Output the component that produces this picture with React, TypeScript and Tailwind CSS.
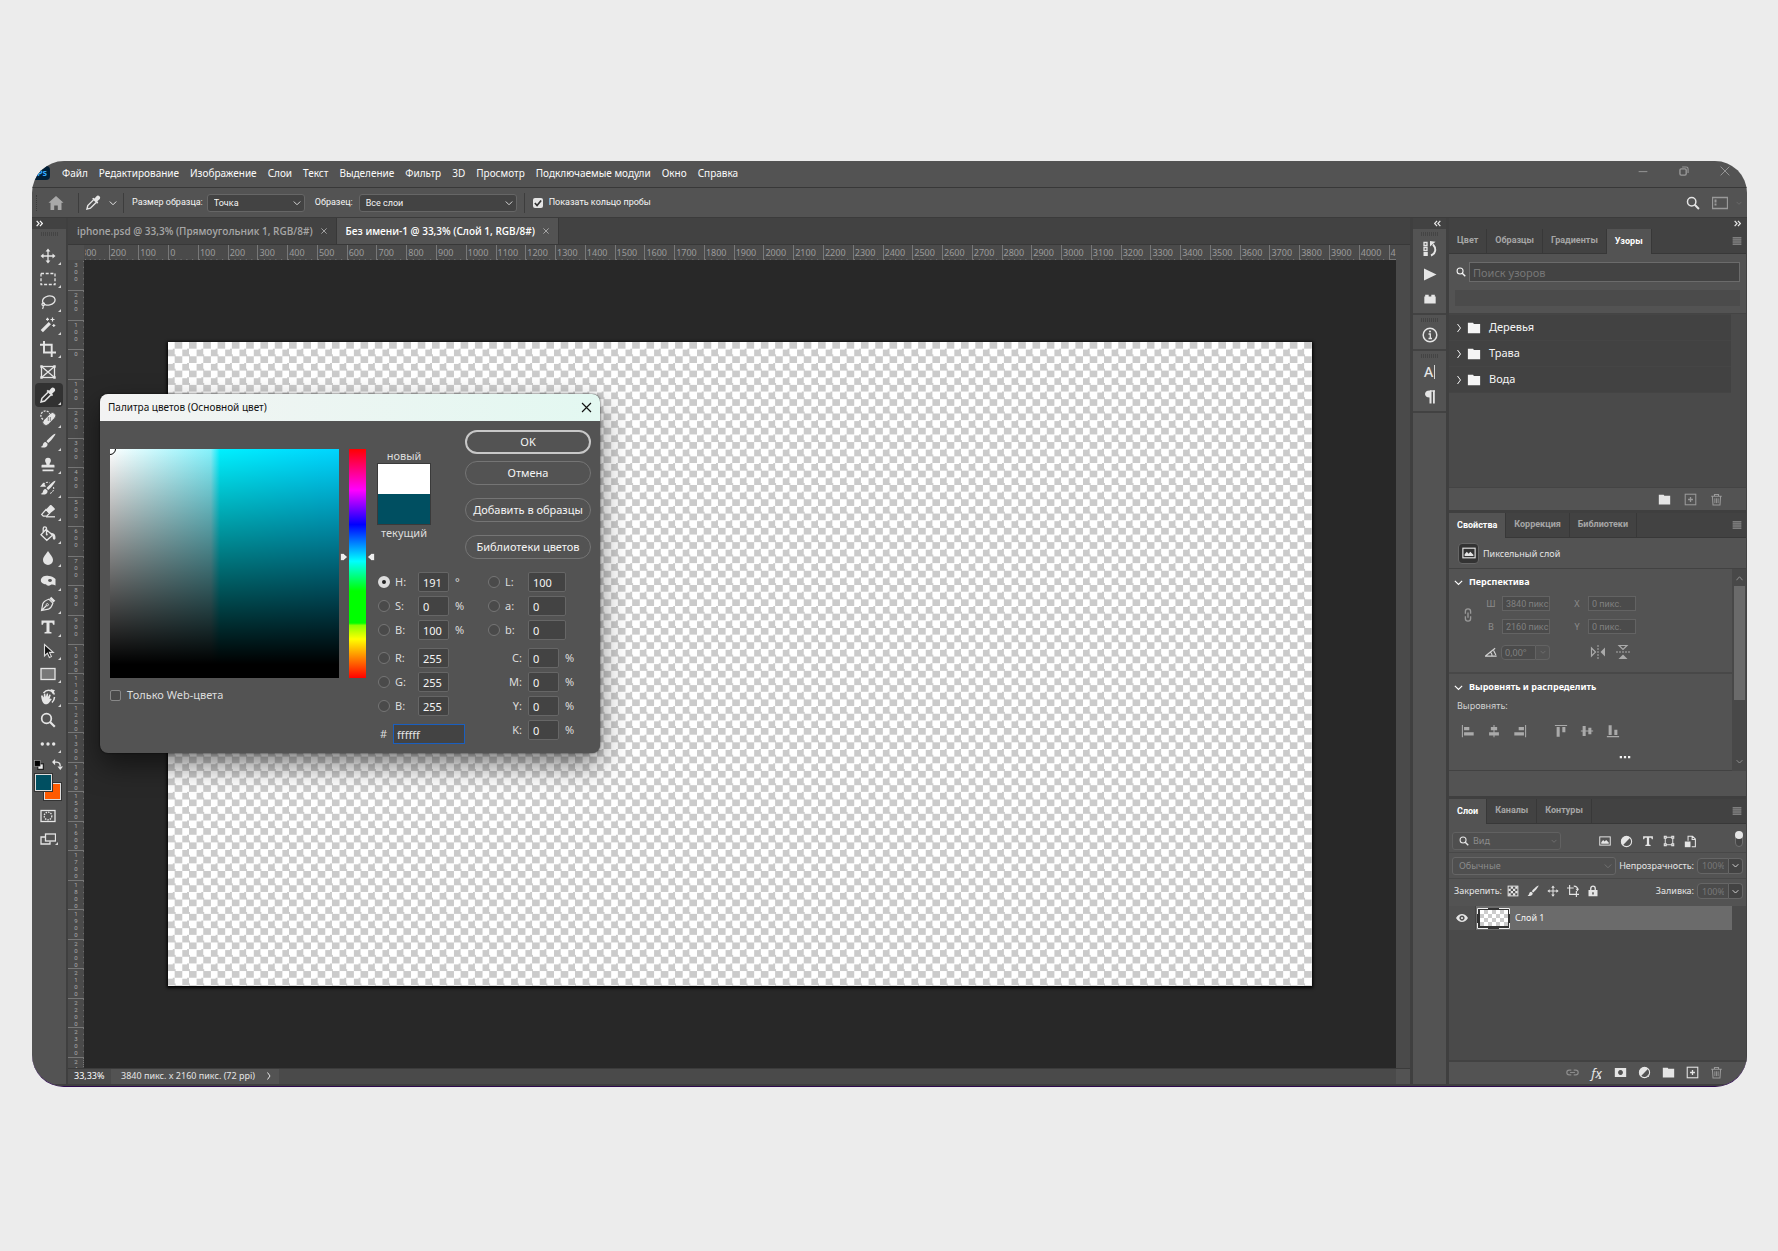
import React, { useState } from "react";

type IconProps = { className?: string; children: React.ReactNode };

function Icon({ className = "size-4", children }: IconProps) {
  return (
    <svg
      viewBox="0 0 16 16"
      className={className + " shrink-0"}
      fill="none"
      stroke="currentColor"
      strokeWidth="1.3"
      aria-hidden="true"
    >
      {children}
    </svg>
  );
}

const solid = { fill: "currentColor", stroke: "none" };

/* ---------- icon shapes ---------- */

const movePath = (
  <>
    <path d="M8 2.5v11M2.5 8h11" />
    <path {...solid} d="M8 .5l2.4 3H5.600zM8 15.500l2.400-3H5.600zM.5 8l3-2.400v4.800zM15.500 8l-3-2.400v4.800z" />
  </>
);
const folderPath = <path {...solid} d="M1 2h6l.8 1.500H15V14H1z" />;
const searchPath = (
  <>
    <circle cx="6.500" cy="6.500" r="4.800" strokeWidth="1.700" />
    <path d="M10 10l4.800 4.800" strokeWidth="2.200" />
  </>
);
const plusBoxPath = (
  <>
    <rect x="1.500" y="1.500" width="13" height="13" />
    <path d="M8 5v6M5 8h6" strokeWidth="1.600" />
  </>
);
const trashPath = (
  <>
    <path d="M1.500 4h13M5.500 4V1.800h5V4M3 4.500l.7 10.300h8.600L13 4.500" />
    <path d="M6 6.500v6M8 6.500v6M10 6.500v6" strokeWidth="1.100" />
  </>
);
const brushPath = (
  <path {...solid} d="M15.300.7c-.9-.5-7.300 5.200-8.800 7.500l1.700 1.700C10.500 8.400 16.200 1.500 15.300.7zM5.700 9c-2.100 0-2.500 1.600-2.900 3-.3 1-1.200 1.600-2.100 1.900 2.600 1.400 7.100.8 6.900-3.200z" />
);
const imagePath = (
  <>
    <rect x="1" y="2.500" width="14" height="11" />
    <path {...solid} d="M3 11.500V9.500l2.500-3 2 2.300L9.500 6.500l3.500 3.500v1.500z" />
  </>
);
const halfCirclePath = (
  <>
    <circle cx="8" cy="8" r="6.300" />
    <path {...solid} d="M3.500 12.500A6.300 6.300 0 0 1 12.500 3.500z" />
  </>
);
const textPath = (
  <path {...solid} d="M1.500 1.500h13v4.300h-1.400l-.8-2H9.500v8.900l2 .5v1.300h-7v-1.300l2-.5V3.800H3.700l-.8 2H1.500z" />
);
const eyedropperPath = (
  <>
    <path d="M8 5.200L1.900 11.300l-.9 3.700 3.700-.9L10.800 8" strokeWidth="1.500" />
    <path {...solid} d="M6.500 4l1.400-1.200 1.200.9 2.100-2.500c1.900-1.900 5.100.8 3.500 3.100l-2.600 2.400 1 1.200-1.200 1.400z" />
  </>
);

type Tool = { name: string; shape: React.ReactNode; active?: boolean; noCorner?: boolean };

const tools: Tool[] = [
  { name: "Перемещение", shape: movePath },
  { name: "Прямоугольная область", shape: <rect x="1" y="2.500" width="14" height="11" strokeDasharray="3 1.700" /> },
  {
    name: "Лассо",
    shape: (
      <>
        <ellipse cx="8.800" cy="6.500" rx="6.300" ry="4.500" transform="rotate(-12 8.800 6.500)" />
        <path d="M3.500 9c-2 .2-2 2.500-.2 2.500s1.400-2.400.2-2.500M3.200 11.500c.3 1.500 0 2.300-.7 3.300" />
      </>
    ),
  },
  {
    name: "Волшебная палочка",
    shape: (
      <>
        <path d="M1.800 14.200l8-8" strokeWidth="3.200" />
        <path d="M7.500.8v3M6 2.300h3M12.500.5v4M10.500 2.500h4M13.800 7v3M12.300 8.500h3" strokeWidth="1.200" />
      </>
    ),
  },
  { name: "Рамка", shape: <path d="M4 0v11.500h12M0 3.800h11.700V16" strokeWidth="1.900" /> },
  {
    name: "Кадр",
    noCorner: true,
    shape: (
      <>
        <rect x="1.500" y="2.500" width="13" height="11" />
        <path d="M1.500 2.500l13 11M14.500 2.500l-13 11" />
        <path {...solid} d="M.3 1.300h2.400v2.400H.3zM13.300 1.300h2.400v2.400h-2.400zM.3 12.300h2.400v2.400H.3zM13.300 12.300h2.400v2.400h-2.400z" />
      </>
    ),
  },
  { name: "Пипетка", active: true, shape: eyedropperPath },
  {
    name: "Восстанавливающая кисть",
    shape: (
      <>
        <circle cx="5.500" cy="5.500" r="4.600" strokeDasharray="2 1.200" strokeWidth="1.300" />
        <rect
          x="1.500"
          y="5.800"
          width="15.500"
          height="6.400"
          rx="3.200"
          transform="rotate(-45 9.300 9)"
          fill="currentColor"
          stroke="#535353"
          strokeWidth=".8"
        />
        <path d="M8.300 10l.01 0M10.300 8l.01 0M8.300 8l.01 0M10.300 10l.01 0" stroke="#535353" strokeLinecap="round" />
      </>
    ),
  },
  { name: "Кисть", shape: brushPath },
  {
    name: "Штамп",
    shape: (
      <path {...solid} d="M8 .8a2.900 2.900 0 0 1 2.900 2.900c0 1.600-1.400 2.200-1.400 4h4c.8 0 1 .6 1 1.200v1.600h-13V8.900c0-.6.2-1.200 1-1.200h4c0-1.800-1.400-2.400-1.400-4A2.900 2.900 0 0 1 8 .8zM2.500 12.500h11v1.700h-11z" />
    ),
  },
  {
    name: "Архивная кисть",
    shape: (
      <>
        {brushPath}
        <path {...solid} d="M0 6.800L3.500 2.500 6 6.800z" />
        <path d="M3.500 4.500C5 2.200 8 1.800 9.500 2.800M13.500 7c.8 2.500-.5 5.500-3.500 6.500" strokeDasharray="2 1" strokeWidth="1" />
      </>
    ),
  },
  {
    name: "Ластик",
    shape: (
      <>
        <path d="M6 6.500l3.500 3.800-2.700 2.900H3.300L1.700 11.400z" />
        <path {...solid} d="M6 6.500L10 2.300c.5-.5 1-.5 1.500 0l3 3c.5.5.5 1 0 1.500L9.500 10.800z" />
        <path d="M6 13.800h9" />
      </>
    ),
  },
  {
    name: "Заливка",
    shape: (
      <>
        <path d="M6 3.300l6.500 6-5.700 5L1 8.800zM6.500 8V2.500c0-2.300-3.300-2.300-3.300 0v3.800" />
        <circle cx="6.800" cy="8.500" r="1" {...solid} />
        <path {...solid} d="M10 6.500l3 .8c2 .7 2.500 2.500 2.500 4.800 0 2.300-2.700 2.300-2.700 0 0-1.200-.3-1.600-.3-2.800z" />
      </>
    ),
  },
  { name: "Размытие", shape: <path {...solid} d="M8 1c1.500 2.700 5 5.700 5 9a5 5 0 0 1-10 0C3 6.700 6.500 3.700 8 1z" /> },
  {
    name: "Губка",
    shape: (
      <>
        <path {...solid} d="M1 6C2 3 6 2 9 3c2 0 4.500 1.300 6.500 3v6.500c-1.500-.6-3.500-1.200-4.500-.7-2.500 1.700-4.500.7-5-.5C3.500 11.300 0 9.800 1 6z" />
        <ellipse cx="10" cy="7.500" rx="1.900" ry="1.400" fill="#535353" stroke="none" />
      </>
    ),
  },
  {
    name: "Перо",
    shape: (
      <>
        <path d="M1.500 14.500l1.300-6.800c.8-2 3.500-3.700 6-4.500l4 4c-.8 2.500-2.500 5.200-4.500 6zM1.500 14.500l5-5" strokeWidth="1.200" />
        <circle cx="7.300" cy="8.700" r="1.100" strokeWidth="1" />
        <path {...solid} d="M9.500 2.700l1.700-2 4.100 4.100-2 1.700z" />
      </>
    ),
  },
  { name: "Текст", shape: textPath },
  {
    name: "Выделение контура",
    shape: <path d="M4.500 1.500v11.500l2.900-2.800 2 4.300 2-.9-2-4.200h3.900z" fill="#111" stroke="#ddd" strokeWidth="1.100" />,
  },
  { name: "Прямоугольник", shape: <rect x="1" y="2.500" width="14" height="11" fill="#777" /> },
  {
    name: "Поворот вида",
    shape: (
      <>
        <path {...solid} d="M1.500 9.500L1 6.800l1.300-.5 1.400 2.200.2-3.700 1.300-.2.6 3.100 1-3.300 1.300.2-.2 3.400L9.600 5.300l1.200.6-1.300 4.200 1.500-.5.7.9c-2.100 1.700-2.300 4.800-5.900 4.800-2.500 0-3.600-2.600-4.300-5.800z" />
        <path d="M3.500 4C7-.2 13 .8 14.300 5.500M14.500 8c0 2.500-1 4-2.500 5.500" strokeWidth="1.500" />
        <path {...solid} d="M10.500 0L15 1.300 12.300 5z" />
      </>
    ),
  },
  { name: "Масштаб", noCorner: true, shape: searchPath },
  {
    name: "Дополнительно",
    shape: (
      <>
        <circle cx="2.300" cy="8" r="1.700" {...solid} />
        <circle cx="8" cy="8" r="1.700" {...solid} />
        <circle cx="13.700" cy="8" r="1.700" {...solid} />
      </>
    ),
  },
];

function Corner() {
  return (
    <svg viewBox="0 0 3 3" className="absolute right-0.5 bottom-0.5 size-[3px] text-neutral-300" aria-hidden="true">
      <path d="M3 0v3H0z" fill="currentColor" />
    </svg>
  );
}

function Grip() {
  return (
    <div className="mx-auto h-1 w-[17px] bg-[repeating-linear-gradient(to_right,#444_0_1px,transparent_1px_2px)]" />
  );
}

function Chevron({ className = "size-2" }: { className?: string }) {
  return (
    <Icon className={className}>
      <path d="M1.500 5l6.500 6.500L14.500 5" strokeWidth="2" />
    </Icon>
  );
}

function DoubleChevron({ left }: { left?: boolean }) {
  return (
    <Icon className="size-[7px]">
      {left ? (
        <path d="M7 2L1.500 8 7 14M14.500 2L9 8l5.500 6" strokeWidth="2.800" />
      ) : (
        <path d="M1.500 2L7 8l-5.500 6M9 2l5.500 6L9 14" strokeWidth="2.800" />
      )}
    </Icon>
  );
}

function PickSelect({
  id,
  value,
  className,
  dim,
}: {
  id: string;
  value: string;
  className: string;
  dim?: boolean;
}) {
  return (
    <div className={"relative " + className}>
      <select
        id={id}
        aria-label={value}
        className={
          "h-[18px] w-full appearance-none rounded-[3px] border border-[#666] pl-1.5 text-[9px] leading-4 outline-none " +
          (dim ? "bg-[#4f4f4f] text-[#8c8c8c]" : "bg-[#434343] text-neutral-100")
        }
      >
        <option>{value}</option>
      </select>
      <span
        className={
          "pointer-events-none absolute top-0 right-1 flex h-full items-center " +
          (dim ? "text-[#707070]" : "text-neutral-300")
        }
      >
        <Chevron />
      </span>
    </div>
  );
}

/* ---------- top bars ---------- */

const menus = [
  "Файл",
  "Редактирование",
  "Изображение",
  "Слои",
  "Текст",
  "Выделение",
  "Фильтр",
  "3D",
  "Просмотр",
  "Подключаемые модули",
  "Окно",
  "Справка",
];

function MenuBar() {
  return (
    <header className="flex h-[27px] items-center border-b border-[#383838] pb-0.5">
      <div className="flex h-[14px] w-[18px] items-center justify-end rounded-sm bg-[#001e36] pr-[3px] text-[9px] font-bold text-[#31a8ff]">
        Ps
      </div>
      <nav className="ml-3 flex gap-[11px] text-[10px] text-neutral-50">
        {menus.map((m) => (
          <button key={m} type="button" className="whitespace-nowrap">
            {m}
          </button>
        ))}
      </nav>
      <div className="ml-auto flex items-center gap-[31px] pr-[17px] pb-1 text-[#999]">
        <button type="button" aria-label="Свернуть">
          <Icon className="size-2.5">
            <path d="M1 9h14" strokeWidth="1.500" />
          </Icon>
        </button>
        <button type="button" aria-label="Развернуть">
          <Icon className="size-2.5">
            <rect x="1.500" y="4.500" width="10" height="10" rx="2" strokeWidth="2.200" />
            <path d="M5 1.500h6.500a3 3 0 0 1 3 3V11" strokeWidth="1.800" />
          </Icon>
        </button>
        <button type="button" aria-label="Закрыть">
          <Icon className="size-2.5">
            <path d="M1 1l14 14M15 1L1 15" strokeWidth="1.500" />
          </Icon>
        </button>
      </div>
    </header>
  );
}

function OptionsBar() {
  return (
    <div className="flex h-[30px] items-center border-b border-[#3b3b3b] font-[Roboto,sans-serif] text-[9px] text-neutral-100">
      <div className="ml-1 h-4 border-l border-dotted border-[#3b3b3b]" />
      <button type="button" aria-label="Главная" className="ml-[11px] text-[#a8a8a8]">
        <Icon>
          <path {...solid} d="M8 1l7.500 6.800h-2V15H9.800v-4.500H6.200V15H2.500V7.800h-2z" />
        </Icon>
      </button>
      <div className="ml-3.5 h-5 border-l border-[#3d3d3d]" />
      <button type="button" aria-label="Пипетка" className="ml-[7px] flex items-center gap-2 text-neutral-200">
        <Icon className="size-[15px]">{eyedropperPath}</Icon>
        <Chevron />
      </button>
      <div className="ml-1.5 h-5 border-l border-[#3d3d3d]" />
      <label htmlFor="sample-size" className="ml-2 whitespace-nowrap">
        Размер образца:
      </label>
      <PickSelect id="sample-size" value="Точка" className="ml-1 w-[98px]" />
      <label htmlFor="sample" className="ml-2.5 whitespace-nowrap">
        Образец:
      </label>
      <PickSelect id="sample" value="Все слои" className="ml-1.5 w-[158px]" />
      <div className="ml-[7px] h-5 border-l border-[#3d3d3d]" />
      <label className="ml-2 flex items-center gap-1.5 whitespace-nowrap">
        <span className="relative flex">
          <input type="checkbox" defaultChecked className="size-2.5 appearance-none rounded-[2px] bg-neutral-200" />
          <Icon className="pointer-events-none absolute inset-0 size-2.5 text-[#333]">
            <path d="M3 8l3.500 4L13 4" strokeWidth="2.800" />
          </Icon>
        </span>
        Показать кольцо пробы
      </label>
      <div className="ml-auto flex items-center gap-3 pr-[5px]">
        <button type="button" aria-label="Поиск" className="text-neutral-200">
          <Icon className="size-[14px]">{searchPath}</Icon>
        </button>
        <button type="button" aria-label="Рабочая среда" className="flex items-center gap-2 text-[#999]">
          <Icon className="size-4">
            <path d="M.5 2.500h15v11H.5z" />
            <path d="M3.500 4.500v3M3.500 8.500v2" strokeWidth="2" />
          </Icon>
          <Chevron className="size-1.5 opacity-40" />
        </button>
      </div>
    </div>
  );
}

/* ---------- left toolbar ---------- */

function Toolbar() {
  return (
    <aside className="flex w-9 shrink-0 flex-col border-r-2 border-[#3f3f3f]">
      <div className="flex h-[11px] items-center bg-[#424242] pl-1 text-neutral-100">
        <DoubleChevron />
      </div>
      <div className="pt-[3px]">
        <Grip />
      </div>
      <div className="mt-2 flex h-[511px] flex-col px-[3px]">
        {tools.map((t) => (
          <button
            key={t.name}
            type="button"
            aria-label={t.name}
            className={
              "relative flex flex-1 items-center justify-center rounded-sm pr-0.5 text-neutral-200 " +
              (t.active ? "bg-[#323232]" : "")
            }
          >
            <Icon className="size-4">{t.shape}</Icon>
            {!t.noCorner && <Corner />}
          </button>
        ))}
      </div>
      <div className="flex h-[19px] items-center gap-2 pl-0.5 text-neutral-200">
        <button type="button" aria-label="Цвета по умолчанию">
          <Icon className="size-[10px]">
            <rect x="6" y="6" width="9" height="9" fill="#eee" stroke="#222" strokeWidth="2" />
            <rect x="1" y="1" width="9" height="9" fill="#000" stroke="#999" strokeWidth="1" />
          </Icon>
        </button>
        <button type="button" aria-label="Поменять цвета">
          <Icon className="size-[11px]">
            <path d="M3 4.500h3.500c4 0 5.500 1.500 5.500 6" strokeWidth="2" />
            <path {...solid} d="M0 4.500L4.500 0v9zM12 16l-4-5h8z" />
          </Icon>
        </button>
      </div>
      <div className="relative ml-[3px] h-[26px] w-[26px]">
        <div className="absolute right-0 bottom-0 size-[17px] border border-[#ddd] bg-[#ff5a00] ring-1 ring-[#333]" />
        <div className="absolute top-0 left-0 size-[17px] border border-[#ddd] bg-[#004f61] ring-1 ring-[#333]" />
      </div>
      <div className="mt-2 flex flex-col gap-[7px] px-2 text-neutral-200">
        <button type="button" aria-label="Быстрая маска">
          <Icon className="size-4">
            <rect x="1" y="2.500" width="14" height="11" />
            <circle cx="8" cy="8" r="3.800" strokeDasharray="1.500 1" />
          </Icon>
        </button>
        <button type="button" aria-label="Режим экрана" className="relative w-5">
          <Icon className="size-4">
            <path d="M5 6H1v7h9v-2.500" />
            <rect x="5.500" y="3" width="10" height="7" />
          </Icon>
          <Corner />
        </button>
      </div>
    </aside>
  );
}

/* ---------- rulers ---------- */

function scale(last: number, lastPart: number, firstPart: number) {
  const marks = [{ label: "300", grow: firstPart, edge: true }];
  marks.push({ label: "200", grow: 100, edge: false }, { label: "100", grow: 100, edge: false });
  for (let v = 0; v < last; v += 100) marks.push({ label: String(v), grow: 100, edge: false });
  marks.push({ label: String(last), grow: lastPart, edge: false });
  return marks;
}

const hMarks = scale(4100, 22, 82);
const vMarks = scale(2400, 35, 75);

function HorizontalRuler() {
  return (
    <div className="flex h-[15px] min-w-0 flex-1 overflow-hidden text-[9px] leading-[15px] text-[#9a9a9a]">
      {hMarks.map((m, i) => (
        <div
          key={i}
          style={{ flexGrow: m.grow }}
          className={
            "min-w-0 basis-0 overflow-hidden border-l bg-[linear-gradient(to_right,#777_1px,transparent_1px)] bg-[length:20%_1px] bg-bottom-left bg-repeat-x " +
            (m.edge ? "border-transparent" : "border-[#777]")
          }
        >
          <div className={m.edge ? "-ml-1" : "pl-px"}>{m.label}</div>
        </div>
      ))}
    </div>
  );
}

function VerticalRuler() {
  return (
    <div className="flex w-4 shrink-0 flex-col overflow-hidden bg-[#4a4a4a] font-[Roboto,sans-serif] text-[6px] leading-[7px] text-[#aaa]">
      {vMarks.map((m, i) => (
        <div
          key={i}
          style={{ flexGrow: m.grow }}
          className={
            "flex min-h-0 basis-0 flex-col items-center overflow-hidden border-t bg-[linear-gradient(to_bottom,#777_1px,transparent_1px)] bg-[length:1px_20%] bg-top-right bg-repeat-y " +
            (m.edge ? "justify-end border-transparent pb-2" : "border-[#777]")
          }
        >
          {m.label.split("").map((d, k) => (
            <span key={k} className="block h-[7px] shrink-0">
              {d}
            </span>
          ))}
        </div>
      ))}
    </div>
  );
}

/* ---------- colour picker ---------- */

function PillButton({ children, main, className = "" }: { children: string; main?: boolean; className?: string }) {
  return (
    <button
      type="button"
      className={
        "h-6 w-full rounded-full whitespace-nowrap text-neutral-100 " +
        (main ? "border-2 border-[#c8c8c8] " : "border border-[#757575] ") +
        className
      }
    >
      {children}
    </button>
  );
}

function Field({
  id,
  label,
  value,
  unit,
  radio,
  checked,
  wide,
  gap,
}: {
  id: string;
  label: string;
  value: string;
  unit?: string;
  radio?: boolean;
  checked?: boolean;
  wide?: boolean;
  gap?: boolean;
}) {
  return (
    <div className={"flex h-5 items-center " + (gap ? "mt-2" : "mt-1")}>
      {radio && (
        <input
          type="radio"
          name="channel"
          aria-label={label}
          defaultChecked={checked}
          className="mr-[5px] size-3 shrink-0 appearance-none rounded-full border border-[#757575] bg-[#4a4a4a] checked:border-4 checked:border-[#ddd] checked:bg-[#222]"
        />
      )}
      <label htmlFor={id} className={radio ? "w-[23px] shrink-0" : "w-10 shrink-0 pr-1.5 text-right"}>
        {label}
      </label>
      <input
        id={id}
        defaultValue={value}
        className={
          "h-5 shrink-0 rounded-[2px] border border-[#666] bg-[#434343] px-1 text-neutral-100 outline-none " +
          (wide ? "w-[38px]" : "w-[31px]")
        }
      />
      {unit && <span className="ml-1.5">{unit}</span>}
    </div>
  );
}

function ColorPicker() {
  const [hex, setHex] = useState("ffffff");
  return (
    <section
      role="dialog"
      aria-label="Палитра цветов"
      className="absolute top-[134px] left-4 w-[500px] overflow-hidden rounded-lg bg-[#535353] text-[11px] text-[#ddd] shadow-[0_12px_28px_rgba(0,0,0,0.5),0_0_2px_rgba(0,0,0,0.8)]"
    >
      <div className="flex h-[27px] items-center justify-between bg-linear-to-r from-[#f3f3f3] to-[#e3f8f1] pr-2 pl-2 text-[#111]">
        <h2 className="text-[10px]">Палитра цветов (Основной цвет)</h2>
        <button type="button" aria-label="Закрыть">
          <Icon className="size-[11px]">
            <path d="M1.500 1.500l13 13M14.500 1.500l-13 13" strokeWidth="1.700" />
          </Icon>
        </button>
      </div>
      <div className="flex pb-[9px]">
        <div className="pt-7 pl-2.5">
          <div className="flex">
            <div className="relative size-[229px] overflow-hidden bg-[linear-gradient(to_bottom,transparent,#000_94%),linear-gradient(to_right,#fff,#85f2fc_44%,#00f0ff_48%,#00d4ff)]">
              <div className="absolute -top-1.5 -left-1.5 size-3 rounded-full border border-black" />
            </div>
            <div className="relative ml-2.5 w-[17px] bg-[linear-gradient(to_bottom,#f00,#f0f_18%,#00f_33%,#0ff_49%,#0f0_62%,#0f0_76%,#8f0_77%,#ff0_83%,#f00)]">
              <svg viewBox="0 0 34 8" className="absolute top-[104px] -left-[9px] h-2 w-[35px]" aria-hidden="true">
                <path d="M0 .5h3L7 4 3 7.500H0zM34 .5h-3L27 4l4 3.500h3z" fill="#eee" stroke="#333" strokeWidth=".5" />
              </svg>
            </div>
          </div>
          <label className="mt-[9px] flex items-center gap-1.5">
            <input type="checkbox" className="size-[11px] appearance-none rounded-[2px] border border-[#888] bg-[#4a4a4a]" />
            Только Web-цвета
          </label>
        </div>
        <div className="ml-[11px] w-[214px] pt-[9px]">
          <div className="flex justify-between">
            <div className="flex w-[54px] flex-col items-center pt-[19px] leading-[14px]">
              <span>новый</span>
              <div className="h-[62px] w-full border border-[#3a3a3a]">
                <div className="h-[30px] bg-white" />
                <div className="h-[30px] bg-[#004f61]" />
              </div>
              <span className="mt-px">текущий</span>
            </div>
            <div className="flex w-[126px] flex-col">
              <PillButton main>OK</PillButton>
              <PillButton className="mt-[7px]">Отмена</PillButton>
              <PillButton className="mt-[13px]">Добавить в образцы</PillButton>
              <PillButton className="mt-[13px]">Библиотеки цветов</PillButton>
            </div>
          </div>
          <div className="mt-[9px] flex gap-[18px] pl-px">
            <div className="w-[92px]">
              <Field id="h" label="H:" value="191" unit="°" radio checked />
              <Field id="s" label="S:" value="0" unit="%" radio />
              <Field id="v" label="B:" value="100" unit="%" radio />
              <Field id="r" label="R:" value="255" radio gap />
              <Field id="g" label="G:" value="255" radio />
              <Field id="bl" label="B:" value="255" radio />
              <div className="mt-2 flex h-5 items-center gap-1.5 pl-0.5">
                <label htmlFor="hex">#</label>
                <input
                  id="hex"
                  value={hex}
                  onChange={(e) => setHex(e.target.value)}
                  className="h-5 w-[72px] shrink-0 border border-[#1a5fc0] bg-[#434343] px-[3px] text-neutral-200 outline-none"
                />
              </div>
            </div>
            <div>
              <Field id="l" label="L:" value="100" radio wide />
              <Field id="a" label="a:" value="0" radio wide />
              <Field id="b" label="b:" value="0" radio wide />
              <Field id="c" label="C:" value="0" unit="%" gap />
              <Field id="m" label="M:" value="0" unit="%" />
              <Field id="y" label="Y:" value="0" unit="%" />
              <Field id="k" label="K:" value="0" unit="%" />
            </div>
          </div>
        </div>
      </div>
    </section>
  );
}

/* ---------- document ---------- */

function DocumentArea() {
  return (
    <main className="flex min-w-0 flex-1 flex-col bg-[#4a4a4a]">
      <div className="flex h-[27px] border-b border-[#383838] bg-[#424242] font-['Open_Sans',sans-serif] text-[10px] font-semibold whitespace-nowrap">
        <div className="flex items-center gap-2 border-r border-[#383838] px-[9px] text-[#a6a6a6]">
          <span>iphone.psd @ 33,3% (Прямоугольник 1, RGB/8#)</span>
          <button type="button" aria-label="Закрыть вкладку">
            <Icon className="size-1.5">
              <path d="M1 1l14 14M15 1L1 15" strokeWidth="2.500" />
            </Icon>
          </button>
        </div>
        <div className="flex items-center gap-2 border-r border-[#383838] bg-[#535353] px-[9px] text-white">
          <span>Без имени-1 @ 33,3% (Слой 1, RGB/8#)</span>
          <button type="button" aria-label="Закрыть вкладку" className="text-[#aaa]">
            <Icon className="size-1.5">
              <path d="M1 1l14 14M15 1L1 15" strokeWidth="2.500" />
            </Icon>
          </button>
        </div>
      </div>
      <div className="flex pr-[14px]">
        <div className="h-[15px] w-4 shrink-0 bg-[#505050]" />
        <HorizontalRuler />
      </div>
      <div className="flex flex-1">
        <VerticalRuler />
        <div className="relative flex min-w-0 flex-1 items-start bg-[#282828] px-[84px] py-[82px]">
          <div className="aspect-[3840/2160] w-full bg-[conic-gradient(#cbcbcb_25%,#fff_0_50%,#cbcbcb_0_75%,#fff_0)] bg-[length:1.25%_2.2222%] shadow-[0_1px_3px_1px_#000]" />
          <ColorPicker />
        </div>
        <div className="w-[14px] shrink-0 bg-[#4a4a4a]" />
      </div>
      <div className="flex h-4 items-center border-t border-[#3b3b3b] text-[9px] whitespace-nowrap text-neutral-200">
        <span className="w-[43px] pl-1.5 text-white">33,33%</span>
        <button type="button" className="flex h-full items-center gap-2.5 bg-[#535353] pr-1.5 pl-2.5">
          3840 пикс. x 2160 пикс. (72 ppi)
          <Icon className="size-2">
            <path d="M5 1l5 7-5 7" strokeWidth="2" />
          </Icon>
        </button>
        <div className="ml-auto h-full w-[14px] bg-[#535353]" />
      </div>
    </main>
  );
}

/* ---------- right icon strip ---------- */

function IconStrip() {
  return (
    <aside className="flex w-[39px] shrink-0 flex-col border-x-[3px] border-[#3f3f3f] text-neutral-200">
      <div className="flex h-[11px] items-center justify-end bg-[#424242] pr-[5px]">
        <DoubleChevron left />
      </div>
      <div className="flex flex-col items-center border-b-2 border-[#424242] pt-[3px] pb-[7px]">
        <Grip />
        <button type="button" aria-label="История" className="mt-[5px]">
          <Icon className="size-4">
            <path d="M2 1.500h3v3H2zM2 6.500h3v3H2z" />
            <path {...solid} d="M1.500 11h4.300v4H1.500z" />
            <path d="M9 14.500c5-2 5.500-7 2-11" strokeWidth="1.900" />
            <path {...solid} d="M8 5.500V0l5.500.8z" />
          </Icon>
        </button>
        <button type="button" aria-label="Операции" className="mt-[9px]">
          <Icon className="size-4">
            <path {...solid} d="M2 2.500L14.500 8.500 2 14.500z" />
          </Icon>
        </button>
        <button type="button" aria-label="Наборы" className="mt-2.5">
          <Icon className="size-[14px]">
            <path {...solid} d="M2.500 5V3h4v2h3V3h4v2h1v8h-13V5z" />
          </Icon>
        </button>
      </div>
      <div className="flex flex-col items-center border-b-2 border-[#424242] pt-[3px] pb-1.5">
        <Grip />
        <button type="button" aria-label="Инфо" className="mt-[5px]">
          <Icon className="size-4">
            <circle cx="8" cy="8" r="6.800" strokeWidth="1.500" />
            <path d="M6.500 7h1.800v4.500M6.500 11.500h3.500" strokeWidth="1.300" />
            <circle cx="8" cy="4.500" r="1" {...solid} />
          </Icon>
        </button>
      </div>
      <div className="flex flex-col items-center border-b-2 border-[#424242] pt-[3px] pb-1.5">
        <Grip />
        <button type="button" aria-label="Символ" className="mt-1.5 flex items-center">
          <span className="text-sm leading-4 font-medium">A</span>
          <span className="ml-px h-[14px] border-l border-neutral-300" />
        </button>
        <button type="button" aria-label="Абзац" className="mt-[9px]">
          <Icon className="size-4">
            <path {...solid} d="M7.500 1.500h2v13h-2V8.500C1.500 8.500 1.500 1.500 7.500 1.500zM11 1.500h1.800v13H11z" />
            <path d="M8 2h5" />
          </Icon>
        </button>
      </div>
    </aside>
  );
}

/* ---------- right panels ---------- */

function TabRow({ tabs, active }: { tabs: string[]; active: string }) {
  return (
    <div
      role="tablist"
      className="flex h-[25px] shrink-0 bg-[#424242] font-[Roboto,sans-serif] text-[9px] font-bold"
    >
      {tabs.map((t) => (
        <button
          key={t}
          type="button"
          role="tab"
          aria-selected={t === active}
          className={
            "border-r border-[#383838] px-2 whitespace-nowrap " +
            (t === active ? "bg-[#535353] text-white" : "border-b text-[#a6a6a6]")
          }
        >
          {t}
        </button>
      ))}
      <div className="flex flex-1 items-center justify-end border-b border-[#383838] pr-1">
        <button type="button" aria-label="Меню панели" className="text-[#aaa]">
          <Icon className="size-[10px]">
            <path d="M1 3h14M1 6.300h14M1 9.600h14M1 13h14" strokeWidth="1.500" />
          </Icon>
        </button>
      </div>
    </div>
  );
}

function PatternsPanel() {
  return (
    <section className="flex flex-col">
      <TabRow tabs={["Цвет", "Образцы", "Градиенты", "Узоры"]} active="Узоры" />
      <div className="flex items-center gap-[3px] pt-2 pr-1.5 pl-[7px] text-neutral-100">
        <Icon className="size-[10px]">{searchPath}</Icon>
        <input
          aria-label="Поиск узоров"
          placeholder="Поиск узоров"
          className="h-5 min-w-0 flex-1 border border-[#6b6b6b] bg-[#434343] px-[3px] text-[11px] outline-none placeholder:text-[#777]"
        />
      </div>
      <div className="mx-1.5 mt-2 h-4 bg-[#4b4b4b]" />
      <div className="mt-[7px] h-[175px] border-y border-[#444] bg-[#4a4a4a] pr-[15px]">
        <ul className="border-b border-[#444] bg-[#424242] text-[11px] text-neutral-100">
          {["Деревья", "Трава", "Вода"].map((n) => (
            <li key={n} className="flex h-[26px] items-center border-t border-[#454545] pl-1.5">
              <Icon className="size-2">
                <path d="M5 0l6 8-6 8" strokeWidth="2" />
              </Icon>
              <Icon className="ml-1 size-[14px]">{folderPath}</Icon>
              <span className="ml-2">{n}</span>
            </li>
          ))}
        </ul>
      </div>
      <div className="flex h-[22px] items-center justify-end gap-[13px] pr-[23px] text-[#999]">
        <button type="button" aria-label="Создать группу" className="text-neutral-200">
          <Icon className="size-[13px]">{folderPath}</Icon>
        </button>
        <button type="button" aria-label="Создать узор">
          <Icon className="size-[13px]">{plusBoxPath}</Icon>
        </button>
        <button type="button" aria-label="Удалить узор">
          <Icon className="size-[13px]">{trashPath}</Icon>
        </button>
      </div>
    </section>
  );
}

function SizeInput({ id, label, value }: { id: string; label: string; value: string }) {
  return (
    <div className="flex items-center">
      <label htmlFor={id} className="w-4 text-center text-[#8c8c8c]">
        {label}
      </label>
      <input
        id={id}
        defaultValue={value}
        className="ml-[3px] h-[15px] w-12 border border-[#636363] bg-[#4b4b4b] pl-[3px] font-[Roboto,sans-serif] text-[#808080] outline-none"
      />
    </div>
  );
}

const alignShapes: { name: string; shape: React.ReactNode }[] = [
  {
    name: "По левому краю",
    shape: <path {...solid} d="M1 1h1.200v14H1zM3.500 3.500h6v3.500h-6zM3.500 9.500h11v3.500h-11z" />,
  },
  {
    name: "По центру горизонтали",
    shape: <path {...solid} d="M7.400 1h1.200v2.500h3v3.500h-3v2.500h5v3.500h-5v2H7.400v-2h-5V9.500h5V7h-3V3.500h3z" />,
  },
  {
    name: "По правому краю",
    shape: <path {...solid} d="M13.800 1H15v14h-1.200zM6.500 3.500h6v3.500h-6zM1.500 9.500h11v3.500h-11z" />,
  },
  {
    name: "По верхнему краю",
    shape: <path {...solid} d="M1 1h14v1.200H1zM3 3.500h3.500v11H3zM9.500 3.500H13v6H9.500z" />,
  },
  {
    name: "По центру вертикали",
    shape: <path {...solid} d="M1 7.400h2v-5h3.500v5h3v-3H13v3h2v1.200h-2v3H9.500v-3h-3v5H3v-5H1z" />,
  },
  {
    name: "По нижнему краю",
    shape: <path {...solid} d="M1 13.800h14V15H1zM3 1.500h3.500v11H3zM9.500 6.500H13v6H9.500z" />,
  },
];

function PropertiesPanel() {
  return (
    <section className="flex flex-col border-t-[3px] border-[#3f3f3f] text-[9px]">
      <TabRow tabs={["Свойства", "Коррекция", "Библиотеки"]} active="Свойства" />
      <div className="flex h-[31px] items-center gap-1 border-b border-[#424242] pl-[9px] text-neutral-200">
        <span className="flex size-[21px] items-center justify-center rounded-sm border border-[#666] bg-[#333]">
          <Icon className="size-[14px]">{imagePath}</Icon>
        </span>
        <span className="pt-0.5">Пиксельный слой</span>
      </div>
      <div className="flex">
        <div className="min-w-0 flex-1">
          <div className="h-[105px] border-b-2 border-[#484848] pt-[5px]">
            <h3 className="flex h-4 items-center gap-1.5 pl-[5px] font-bold text-white">
              <Chevron className="size-[9px]" />
              Перспектива
            </h3>
            <div className="mt-1.5 flex items-center pl-3">
              <Icon className="size-[14px] text-[#999]">
                <path d="M5 6.500V4a3 3 0 0 1 6 0v2.500M5 9.500V12a3 3 0 0 0 6 0V9.500M8 5v6" strokeWidth="1.500" />
              </Icon>
              <div className="ml-2 grid grid-cols-[68px_68px] gap-x-[18px] gap-y-2">
                <SizeInput id="w" label="Ш" value="3840 пикс" />
                <SizeInput id="x" label="X" value="0 пикс." />
                <SizeInput id="hh" label="В" value="2160 пикс" />
                <SizeInput id="yy" label="Y" value="0 пикс." />
              </div>
            </div>
            <div className="mt-2.5 flex items-center pl-9">
              <Icon className="size-3 text-neutral-300">
                <path d="M0 13.500h15.500M1 13L13.500 3M9.500 13.500c0-2-.5-3.500-2-5M11.500 6l3 6" strokeWidth="1.500" />
              </Icon>
              <input
                aria-label="Угол"
                defaultValue="0,00°"
                className="ml-1 h-[15px] w-[35px] rounded-l-sm border border-[#636363] bg-[#4b4b4b] px-[3px] text-[#808080] outline-none"
              />
              <button
                type="button"
                aria-label="Выбрать угол"
                className="flex h-[15px] w-[14px] items-center justify-center rounded-r-sm border border-l-0 border-[#636363] text-[#757575]"
              >
                <Chevron className="size-1.5" />
              </button>
              <button type="button" aria-label="Отразить по горизонтали" className="ml-10 text-[#aaa]">
                <Icon className="size-4">
                  <path d="M1.500 4v8l4-4z" strokeWidth="1.200" />
                  <path d="M8 1v14" strokeDasharray="2 1" strokeWidth="1" />
                  <path {...solid} d="M15 3.500v9L10.500 8z" />
                </Icon>
              </button>
              <button type="button" aria-label="Отразить по вертикали" className="ml-[9px] text-[#aaa]">
                <Icon className="size-4">
                  <path d="M4 1.500h8l-4 4z" strokeWidth="1.200" />
                  <path d="M1 8h14" strokeDasharray="2 1" strokeWidth="1" />
                  <path {...solid} d="M3.500 15h9L8 10.500z" />
                </Icon>
              </button>
            </div>
          </div>
          <div className="h-[97px] border-b border-[#424242] pt-[5px]">
            <h3 className="flex h-4 items-center gap-1.5 pl-[5px] font-bold text-white">
              <Chevron className="size-[9px]" />
              Выровнять и распределить
            </h3>
            <p className="mt-[5px] pl-2 leading-3 text-neutral-300">Выровнять:</p>
            <div className="mt-3 flex pl-3 text-[#aaa]">
              {alignShapes.map((a, i) => (
                <button key={a.name} type="button" aria-label={a.name} className={i === 3 ? "ml-[27px]" : i ? "ml-3" : ""}>
                  <Icon className="size-[14px]">{a.shape}</Icon>
                </button>
              ))}
            </div>
            <button type="button" aria-label="Ещё" className="mt-[13px] ml-[170px] flex text-neutral-100">
              <Icon className="size-3">
                <path d="M1 8h3M6.500 8h3M12 8h3" strokeWidth="3" />
              </Icon>
            </button>
          </div>
        </div>
        <div className="flex w-[14px] flex-col items-center bg-[#484848] py-1.5 text-[#999]">
          <Icon className="size-[7px]">
            <path d="M1 12l7-8 7 8" strokeWidth="2" />
          </Icon>
          <div className="mt-1 h-[114px] w-[11px] bg-[#6a6a6a]" />
          <Chevron className="mt-auto size-[7px]" />
        </div>
      </div>
      <div className="h-[25px]" />
    </section>
  );
}

function PercentInput({ id, label }: { id: string; label: string }) {
  return (
    <div className="ml-auto flex items-center">
      <label htmlFor={id} className="whitespace-nowrap text-neutral-200">
        {label}
      </label>
      <input
        id={id}
        defaultValue="100%"
        className="ml-[3px] h-4 w-8 rounded-l-sm border border-[#666] bg-[#4b4b4b] px-1 text-[#777] outline-none"
      />
      <button
        type="button"
        aria-label={label}
        className="flex h-4 w-[14px] items-center justify-center rounded-r-sm border border-l-0 border-[#666] bg-[#434343] text-neutral-200"
      >
        <Chevron className="size-[7px]" />
      </button>
    </div>
  );
}

const transformBoxPath = (
  <>
    <path d="M3 3h10v10H3z" />
    <path {...solid} d="M1 1h4v4H1zM11 1h4v4h-4zM1 11h4v4H1zM11 11h4v4h-4z" />
    <path d="M3 2.500v1M13 2.500v1M3 12.500v1M13 12.500v1" stroke="#535353" strokeWidth="1" />
  </>
);

function LayersPanel() {
  return (
    <section className="flex flex-1 flex-col border-t-[3px] border-[#3f3f3f] text-[9px]">
      <TabRow tabs={["Слои", "Каналы", "Контуры"]} active="Слои" />
      <div className="flex h-[29px] items-center border-b border-[#484848] pt-1.5 pr-[3px] pl-[3px] text-neutral-200">
        <div className="relative w-[109px]">
          <select
            aria-label="Вид"
            className="h-[18px] w-full appearance-none rounded-[3px] border border-[#616161] bg-[#4f4f4f] pl-5 text-[#8c8c8c] outline-none"
          >
            <option>Вид</option>
          </select>
          <Icon className="absolute top-1 left-[7px] size-[10px]">{searchPath}</Icon>
          <Chevron className="absolute top-1.5 right-1 size-1.5 text-[#777]" />
        </div>
        <div className="ml-auto flex items-center gap-[9px]">
          <Icon className="size-3">{imagePath}</Icon>
          <Icon className="size-[13px]">{halfCirclePath}</Icon>
          <Icon className="size-3">{textPath}</Icon>
          <Icon className="size-3">{transformBoxPath}</Icon>
          <Icon className="size-[13px]">
            <path d="M5 7V1.500h5.500L14 5v9.500H9.500M10 1.500V5.500h4" />
            <path {...solid} d="M1 8h7v7H1z" />
          </Icon>
        </div>
        <button
          type="button"
          aria-label="Включить фильтр"
          className="-mt-1 ml-[38px] flex h-4 w-2 flex-col rounded-full border border-[#707070] bg-[#454545]"
        >
          <span className="-mx-px -mt-px size-2 rounded-full bg-neutral-200" />
        </button>
      </div>
      <div className="flex h-[26px] items-center border-b border-[#484848] pr-[3px] pl-[3px]">
        <PickSelect id="blend" value="Обычные" dim className="w-[164px]" />
        <PercentInput id="opacity" label="Непрозрачность:" />
      </div>
      <div className="flex h-[27px] items-center pr-[3px] pb-[3px] pl-[5px] text-neutral-200">
        <span>Закрепить:</span>
        <div className="ml-[5px] flex items-center gap-2">
          <Icon className="size-3">
            <rect x="1.500" y="1.500" width="13" height="13" />
            <path {...solid} d="M5 2h3v3H5zM11 2h3v3h-3zM2 5h3v3H2zM8 5h3v3H8zM5 8h3v3H5zM11 8h3v3h-3zM2 11h3v3H2zM8 11h3v3H8z" />
          </Icon>
          <Icon className="size-3">{brushPath}</Icon>
          <Icon className="size-3">{movePath}</Icon>
          <Icon className="size-3">
            <path d="M3.500 0v12.500H16M0 4h9M12.500 8v8M9 1.500c3 0 5 1.500 5.500 4.500" strokeWidth="1.500" />
            <path {...solid} d="M11.500 5h4.500l-2 3.500z" />
          </Icon>
          <Icon className="size-3">
            <path d="M5 7V4.500a3 3 0 0 1 6 0V7" strokeWidth="1.800" />
            <path {...solid} fillRule="evenodd" d="M2 6.500h12V15H2zM7 9.500h2v3H7z" />
          </Icon>
        </div>
        <PercentInput id="fill" label="Заливка:" />
      </div>
      <div className="flex-1 bg-[#4a4a4a] pr-[14px]">
        <div className="flex h-6 items-center">
          <button type="button" aria-label="Видимость слоя" className="flex h-full w-[26px] items-center justify-center bg-[#505050]">
            <Icon className="size-3 text-neutral-200">
              <path {...solid} fillRule="evenodd" d="M0 8c4-7 12-7 16 0-4 7-12 7-16 0zM8 4.500a3.500 3.500 0 1 0 .01 0zM8 6.500a1.500 1.500 0 1 1-.01 0z" />
            </Icon>
          </button>
          <div className="flex h-full flex-1 items-center gap-[5px] border-l border-[#444] bg-[#6b6b6b] pl-px text-neutral-100">
            <div className="relative flex h-[21px] w-[33px] items-center justify-center bg-[#333]">
              <div className="h-4 w-[28px] bg-[conic-gradient(#cbcbcb_25%,#fff_0_50%,#cbcbcb_0_75%,#fff_0)] bg-[length:8px_8px]" />
              <svg viewBox="0 0 33 21" className="absolute inset-0" fill="none" stroke="#eee" aria-hidden="true">
                <path d="M.5 6V.5H11M22 .5h10.500V6M.5 15v5.500H11M22 20.500h10.500V15" />
              </svg>
            </div>
            Слой 1
          </div>
        </div>
      </div>
      <div className="flex h-6 items-center justify-end gap-[11px] border-t-2 border-[#424242] pr-[23px] text-neutral-200">
        <Icon className="size-[13px] text-[#8c8c8c]">
          <path d="M6.500 5H4a3 3 0 0 0 0 6h2.500M9.500 5H12a3 3 0 0 1 0 6H9.500M5 8h6" strokeWidth="1.500" />
        </Icon>
        <button type="button" aria-label="Стили слоя" className="relative w-[13px] text-[13px] leading-4 italic">
          fx
          <Corner />
        </button>
        <button type="button" aria-label="Маска">
          <Icon className="size-[13px]">
            <path {...solid} fillRule="evenodd" d="M1 2.500h14v11H1zM8 5a3 3 0 1 0 .01 0z" />
          </Icon>
        </button>
        <button type="button" aria-label="Корректирующий слой" className="relative">
          <Icon className="size-[13px]">{halfCirclePath}</Icon>
          <Corner />
        </button>
        <button type="button" aria-label="Создать группу">
          <Icon className="size-[13px]">{folderPath}</Icon>
        </button>
        <button type="button" aria-label="Создать слой">
          <Icon className="size-[13px]">{plusBoxPath}</Icon>
        </button>
        <button type="button" aria-label="Удалить слой" className="text-[#999]">
          <Icon className="size-[13px]">{trashPath}</Icon>
        </button>
      </div>
    </section>
  );
}

export default function App() {
  return (
    <div className="min-h-screen bg-[#ececec] px-8 py-[161px] pr-[31px] font-['Noto_Sans','Open_Sans',sans-serif]">
      <div className="overflow-hidden rounded-[32px] border-b border-[#2d0a4e] bg-[#535353]">
        <MenuBar />
        <OptionsBar />
        <div className="flex border-b-2 border-[#3f3f3f]">
          <Toolbar />
          <DocumentArea />
          <IconStrip />
          <div className="flex w-[298px] shrink-0 flex-col border-r border-[#424242]">
            <div className="flex h-[11px] items-center justify-end bg-[#424242] pr-[5px] text-neutral-200">
              <DoubleChevron />
            </div>
            <PatternsPanel />
            <PropertiesPanel />
            <LayersPanel />
          </div>
        </div>
      </div>
    </div>
  );
}
